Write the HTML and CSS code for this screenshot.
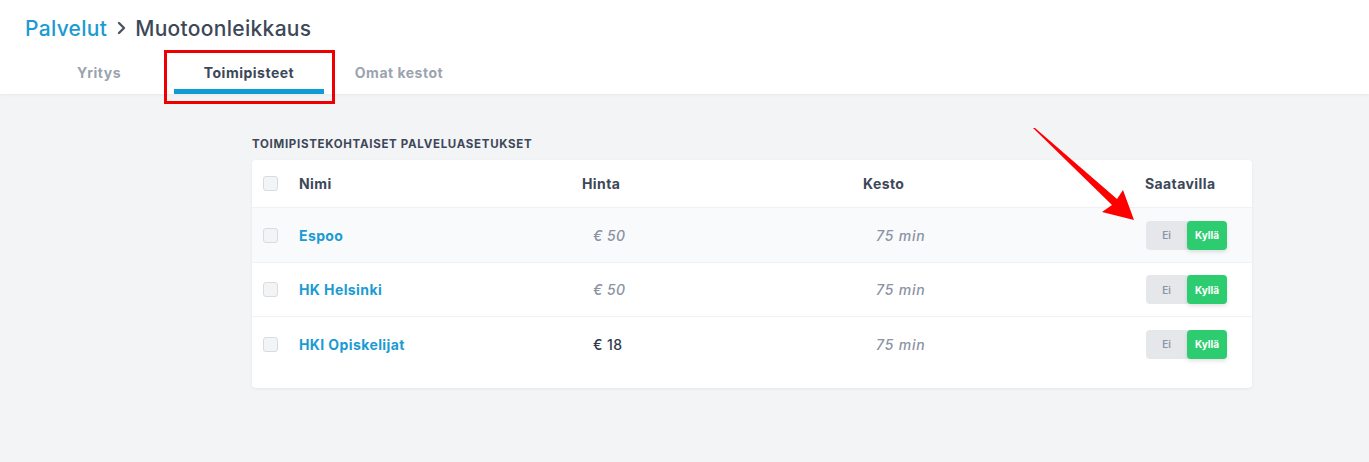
FILE: index.html
```html
<!DOCTYPE html>
<html lang="fi">
<head>
<meta charset="utf-8">
<title>Muotoonleikkaus</title>
<link rel="stylesheet" href="styles.css">
</head>
<body>
<header class="top">
  <div class="crumbs">
    <a class="crumb-link">Palvelut</a>
    <svg class="chev" width="12" height="14" viewBox="0 0 12 14"><path d="M3 2 L8 7 L3 12" fill="none" stroke="#4b5563" stroke-width="2.4" stroke-linecap="round" stroke-linejoin="round"/></svg>
    <span class="crumb-current">Muotoonleikkaus</span>
  </div>
  <nav class="tabs">
    <div class="tab">Yritys</div>
    <div class="tab active">Toimipisteet</div>
    <div class="tab">Omat kestot</div>
  </nav>
</header>
<main class="content">
  <section class="panel">
    <h2 class="section-title">TOIMIPISTEKOHTAISET PALVELUASETUKSET</h2>
    <div class="card">
      <div class="row head">
        <span class="cb"></span>
        <span class="c-name">Nimi</span>
        <span class="c-price">Hinta</span>
        <span class="c-dur">Kesto</span>
        <span class="c-av">Saatavilla</span>
      </div>
      <div class="row hover">
        <span class="cb"></span>
        <a class="c-name link">Espoo</a>
        <span class="c-price val muted">€ 50</span>
        <span class="c-dur val muted">75 min</span>
        <span class="c-av"><span class="toggle"><span class="no">Ei</span><span class="yes">Kyllä</span></span></span>
      </div>
      <div class="row">
        <span class="cb"></span>
        <a class="c-name link">HK Helsinki</a>
        <span class="c-price val muted">€ 50</span>
        <span class="c-dur val muted">75 min</span>
        <span class="c-av"><span class="toggle"><span class="no">Ei</span><span class="yes">Kyllä</span></span></span>
      </div>
      <div class="row last">
        <span class="cb"></span>
        <a class="c-name link">HKI Opiskelijat</a>
        <span class="c-price val dark">€ 18</span>
        <span class="c-dur val muted">75 min</span>
        <span class="c-av"><span class="toggle"><span class="no">Ei</span><span class="yes">Kyllä</span></span></span>
      </div>
    </div>
  </section>
</main>
<div class="highlight"></div>
<svg class="arrow" width="1369" height="462" viewBox="0 0 1369 462"><path d="M1033 128 L1035 128 L1117 199 L1123 190 L1134 220 L1102 212 L1112 205 Z" fill="#ff0000"/></svg>
</body>
</html>
```
FILE: styles.css
```css
* { box-sizing: border-box; }
html, body { margin: 0; padding: 0; }
body {
  font-family: "Inter", "Noto Sans", sans-serif;
  background: #f3f4f6;
  color: #3d4757;
  width: 1369px;
  height: 462px;
  overflow: hidden;
  position: relative;
}
.top {
  background: #fff;
  height: 94px;
  box-shadow: 0 1px 3px rgba(0,0,0,0.05);
  padding-top: 14px;
}
.crumbs {
  display: flex;
  align-items: center;
  padding-left: 25px;
  height: 28px;
  font-size: 21px;
  font-weight: 500;
  letter-spacing: 0.3px;
}
.crumb-link { color: #1b9bd1; }
.chev { margin: 0 7px 0 9px; }
.crumb-current { color: #3d4757; }
.tabs {
  display: flex;
  padding-left: 24px;
  margin-top: 17px;
}
.tab {
  width: 150px;
  height: 35px;
  text-align: center;
  font-size: 14px;
  font-weight: 700;
  color: #9ca3af;
  padding-top: 5px;
  letter-spacing: 0.5px;
}
.tab.active {
  color: #3d4757;
  border-bottom: 5px solid #0f9bd3;
}
.content { padding-top: 43px; }
.panel { width: 1000px; margin-left: 252px; }
.section-title {
  margin: 0 0 9px 0;
  font-size: 11.5px;
  font-weight: 700;
  color: #3d4757;
  letter-spacing: 0.7px;
  height: 14px;
  line-height: 14px;
}
.card {
  background: #fff;
  border-radius: 4px;
  box-shadow: 0 1px 3px rgba(0,0,0,0.06);
  padding-bottom: 17px;
}
.row {
  display: grid;
  grid-template-columns: 37px 282px 281px 282px 82px;
  padding: 0 25px 0 11px;
  align-items: center;
  height: 54px;
  border-bottom: 1px solid #f0f1f3;
  font-size: 14px;
  letter-spacing: 0.4px;
}
.row.head { height: 48px; font-weight: 700; color: #3d4757; }
.row.hover { background: #f9fafb; height: 55px; }
.row.last { border-bottom: none; }
.c-name { margin-left: -1px; }
.cb {
  width: 15px;
  height: 15px;
  border: 1px solid #d8dbe0;
  border-radius: 3px;
  background: #f3f4f6;
}
.link { color: #1b9bd1; font-weight: 700; }
.val { font-weight: 500; }
.c-price.val { padding-left: 11px; }
.c-dur.val { padding-left: 13px; letter-spacing: 0.8px; }
.muted { color: #8a93a3; font-style: italic; }
.dark { color: #2f3a4a; }
.toggle {
  display: inline-flex;
  height: 29px;
  border-radius: 4px;
  background: #e5e7eb;
  margin-left: 1px;
  font-size: 10px;
  font-weight: 700;
  letter-spacing: 0;
}
.toggle .no {
  width: 41px;
  display: flex; align-items: center; justify-content: center;
  color: #8d96a6;
  font-weight: 600;
}
.toggle .yes {
  width: 40px;
  display: flex; align-items: center; justify-content: center;
  background: #2ecc71;
  color: #fff;
  border-radius: 4px;
  box-shadow: 0 2px 4px rgba(0,0,0,0.12);
}
.highlight {
  position: absolute;
  left: 164px;
  top: 50px;
  width: 171px;
  height: 54px;
  border: 3px solid #ee0000;
}
.arrow { position: absolute; left: 0; top: 0; pointer-events: none; }
```
